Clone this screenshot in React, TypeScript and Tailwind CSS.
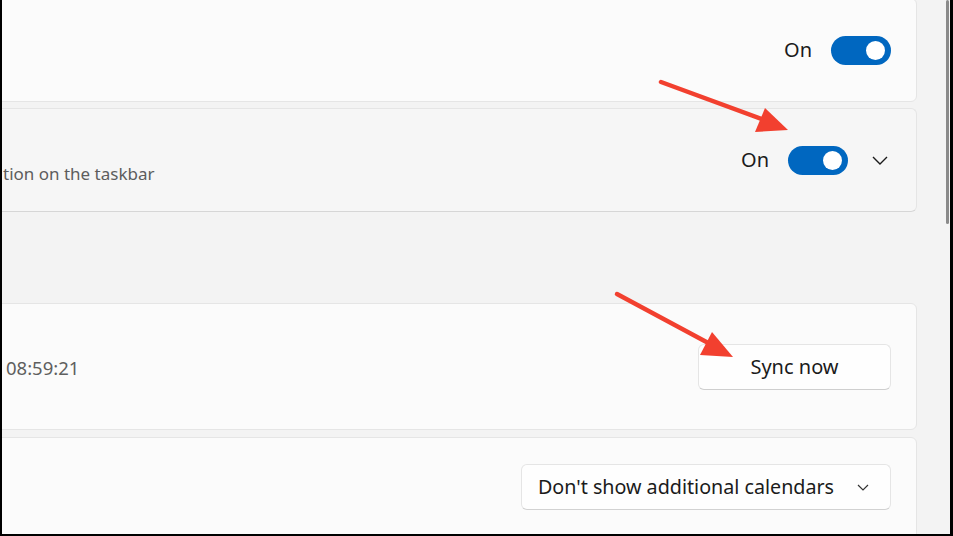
import React from "react";

function Toggle() {
  return (
    <div className="w-[60px] h-[29px] rounded-full bg-[#0067c0] flex items-center justify-end pr-[6px]">
      <div className="w-[19px] h-[19px] rounded-full bg-white" />
    </div>
  );
}

export default function App() {
  return (
    <div
      className="relative w-[953px] h-[536px] overflow-hidden bg-black pl-[2px] pr-[3px] pb-[2px]"
      style={{ fontFamily: '"Noto Sans", "Open Sans", sans-serif' }}
    >
      <div className="flex h-full bg-[#f3f3f3]">
        <div className="flex-1 overflow-hidden flex flex-col pr-[29px]">
          {/* card 1 */}
          <div className="-ml-[10px] mt-[-2px] h-[104px] shrink-0 rounded-[6px] border border-[#e5e5e5] bg-[#fbfbfb] flex items-center justify-end pr-[25px] gap-[19px]">
            <span className="text-[20px] text-[#1b1b1b] leading-none">On</span>
            <Toggle />
          </div>
          {/* card 2 */}
          <div className="-ml-[10px] mt-[6px] h-[104px] shrink-0 rounded-[6px] border border-[#e5e5e5] border-b-[#d6d6d6] bg-[#f6f6f6] flex items-center pl-[10px] pr-[28px]">
            <div className="flex-1 pt-[28px]">
              <div className="text-[17px] leading-[20px] text-[#5d5d5d]">tion on the taskbar</div>
            </div>
            <span className="text-[20px] text-[#1b1b1b] leading-none">On</span>
            <div className="ml-[19px]">
              <Toggle />
            </div>
            <svg className="ml-[24px]" width="16" height="9" viewBox="0 0 16 9">
              <polyline points="1,1 8,8 15,1" fill="none" stroke="#1b1b1b" strokeWidth="1.4" />
            </svg>
          </div>
          {/* card 3 */}
          <div className="-ml-[10px] mt-[91px] h-[127px] shrink-0 rounded-[6px] border border-[#e5e5e5] bg-[#fbfbfb] flex items-center pl-[13px] pr-[25px]">
            <div className="flex-1 pt-[5px]">
              <span className="text-[18.5px] leading-[22px] text-[#5f5f5f]">08:59:21</span>
            </div>
            <button className="w-[193px] h-[46px] rounded-[6px] border border-[#e5e5e5] border-b-[#cfcfcf] bg-[#fefefe] text-[20px] text-[#1b1b1b]">
              Sync now
            </button>
          </div>
          {/* card 4 */}
          <div className="-ml-[10px] mt-[7px] h-[130px] shrink-0 rounded-[6px] border border-[#e5e5e5] bg-[#fbfbfb] flex justify-end pt-[26px] pr-[25px]">
            <div className="w-[370px] h-[46px] rounded-[6px] border border-[#e5e5e5] border-b-[#d2d2d2] bg-[#fefefe] flex items-center justify-between pl-[16px] pr-[21px]">
              <span className="text-[19.7px] text-[#1b1b1b] leading-none">Don't show additional calendars</span>
              <svg width="12" height="7" viewBox="0 0 12 7">
                <polyline points="1,1 6,6 11,1" fill="none" stroke="#333" strokeWidth="1.2" />
              </svg>
            </div>
          </div>
        </div>
        {/* scrollbar */}
        <div className="w-[4px] shrink-0 pr-[1px]">
          <div className="w-[3px] h-[224px] rounded-full bg-[#8a8a8a]" />
        </div>
      </div>
      {/* annotation arrows */}
      <svg className="absolute left-0 top-0 pointer-events-none" width="953" height="536" viewBox="0 0 953 536">
        <line x1="661" y1="82" x2="770" y2="122" stroke="#f2402f" strokeWidth="4.5" strokeLinecap="round" />
        <polygon points="788,130 765,108 755,132" fill="#f2402f" />
        <line x1="617" y1="294" x2="712" y2="345" stroke="#f2402f" strokeWidth="4.5" strokeLinecap="round" />
        <polygon points="733,357 712,332 700,355" fill="#f2402f" />
      </svg>
    </div>
  );
}
